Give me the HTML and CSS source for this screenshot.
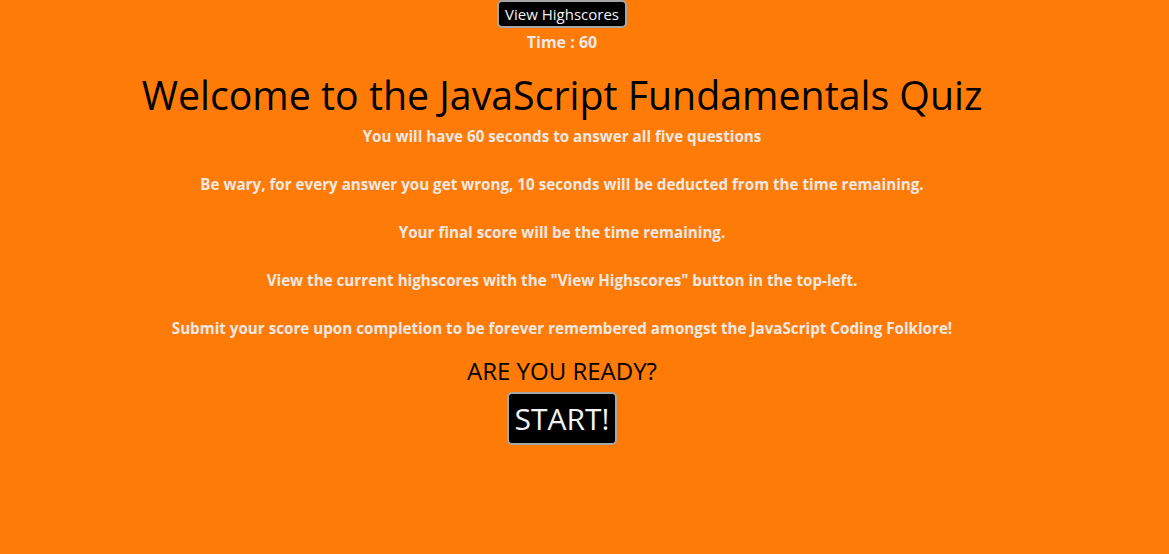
FILE: index.html
```html
<!DOCTYPE html>
<html lang="en">
<head>
<meta charset="utf-8">
<title>JavaScript Fundamentals Quiz</title>
<link rel="stylesheet" href="styles.css">
</head>
<body>
<div class="page">
  <header class="top">
    <button class="btn btn-small">View Highscores</button>
    <div class="timer">Time : 60</div>
  </header>
  <main class="intro">
    <h1 class="title">Welcome to the JavaScript Fundamentals Quiz</h1>
    <p class="rule">You will have 60 seconds to answer all five questions</p>
    <p class="rule">Be wary, for every answer you get wrong, 10 seconds will be deducted from the time remaining.</p>
    <p class="rule">Your final score will be the time remaining.</p>
    <p class="rule">View the current highscores with the "View Highscores" button in the top-left.</p>
    <p class="rule">Submit your score upon completion to be forever remembered amongst the JavaScript Coding Folklore!</p>
    <h2 class="ready">ARE YOU READY?</h2>
    <button class="btn btn-start">START!</button>
  </main>
</div>
</body>
</html>
```
FILE: styles.css
```css
html, body {
  margin: 0;
  padding: 0;
}
body {
  background: #ff7b07;
  font-family: "Open Sans", "Noto Sans", sans-serif;
  min-height: 554px;
}
.page {
  width: 1124px;
}
.top {
  display: flex;
  flex-direction: column;
  align-items: center;
}
.btn {
  background: #000;
  color: #f2f2f2;
  border: 2px solid #a6a6a6;
  border-radius: 5px;
  font-family: "Open Sans", "Noto Sans", sans-serif;
  cursor: pointer;
}
.btn-small {
  font-size: 15px;
  height: 28px;
  padding: 0 6px;
}
.timer {
  margin-top: 5px;
  color: #f2e9e4;
  font-weight: 700;
  font-size: 16px;
  line-height: 18px;
}
.intro {
  display: flex;
  flex-direction: column;
  align-items: center;
  text-align: center;
}
.title {
  margin: 17px 0 4px;
  font-size: 39.3px;
  font-weight: 400;
  line-height: 54px;
  color: #000;
}
.rule {
  margin: 0 0 27px;
  color: #f2e9e4;
  font-weight: 700;
  font-size: 15.2px;
  line-height: 21px;
}
.rule:last-of-type {
  margin-bottom: 17px;
}
.ready {
  margin: 0;
  font-size: 24px;
  font-weight: 400;
  line-height: 30px;
  color: #000;
}
.btn-start {
  margin-top: 6px;
  font-size: 30px;
  height: 53px;
  padding: 0 6px;
}
```
